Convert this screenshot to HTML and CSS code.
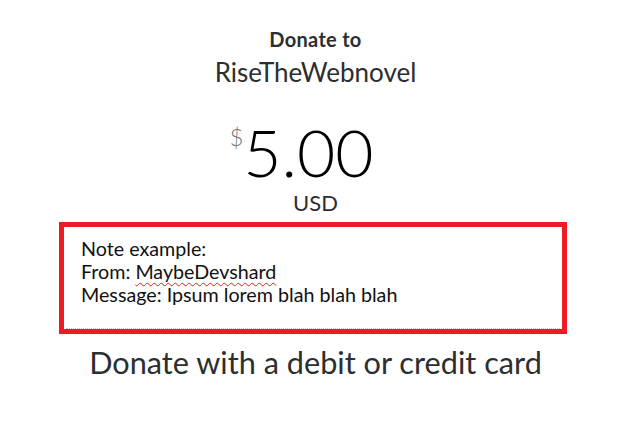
FILE: index.html
```html
<!DOCTYPE html>
<html lang="en">
<head>
    <meta charset="UTF-8">
    <meta name="viewport" content="width=device-width, initial-scale=1.0">
    <title>Donate</title>
    <link rel="stylesheet" href="styles.css">
</head>
<body>
    <div class="page">
        <h2 class="donate-to">Donate to</h2>
        <h1 class="recipient">RiseTheWebnovel</h1>
        <div class="amount">
            <span class="currency-sign">$</span>
            <span class="value">5.00</span>
        </div>
        <div class="currency">USD</div>

        <div class="note-box">
            <div class="note">
                Note example:<br>
                From: <span class="misspelled">MaybeDevshard</span><br>
                Message: Ipsum lorem blah blah blah
            </div>
        </div>

        <div class="card-title">Donate with a debit or credit card</div>
    </div>
</body>
</html>
```

FILE: styles.css
```css
body {
    margin: 0;
    background: #fff;
    font-family: Lato, "Open Sans", sans-serif;
    color: #2c2e2f;
}
.page {
    width: 631px;
    padding-top: 28px;
    display: flex;
    flex-direction: column;
    align-items: center;
}
.donate-to {
    margin: 0;
    font-size: 20px;
    line-height: 22px;
    font-weight: 700;
    letter-spacing: 0.3px;
}
.recipient {
    margin: 6px 0 0;
    font-size: 26px;
    line-height: 32px;
    font-weight: 400;
}
.amount {
    margin: 31px 28px 0 0;
    display: flex;
    align-items: flex-start;
}
.currency-sign {
    font-size: 24px;
    line-height: 24px;
    font-weight: 300;
    color: #6c7378;
    margin: 6px 0 0 0;
}
.value {
    font-size: 66px;
    line-height: 66px;
    font-weight: 300;
    color: #000;
}
.currency {
    margin-top: 6px;
    font-size: 22px;
    line-height: 24px;
}
.note-box {
    align-self: flex-start;
    margin: 7px 0 0 59px;
    width: 498px;
    border: 5px solid #ed1c24;
}
.note {
    padding: 10px 15px 22px;
    margin: 0 2px;
    border-bottom: 1px dotted #b7bcc6;
    font-size: 19.7px;
    line-height: 23px;
    color: #111;
}
.misspelled {
    text-decoration: underline wavy #e02020;
    text-decoration-thickness: 1px;
    text-underline-offset: 3px;
}
.card-title {
    margin-top: 11px;
    font-size: 30.7px;
    line-height: 36px;
}
```
